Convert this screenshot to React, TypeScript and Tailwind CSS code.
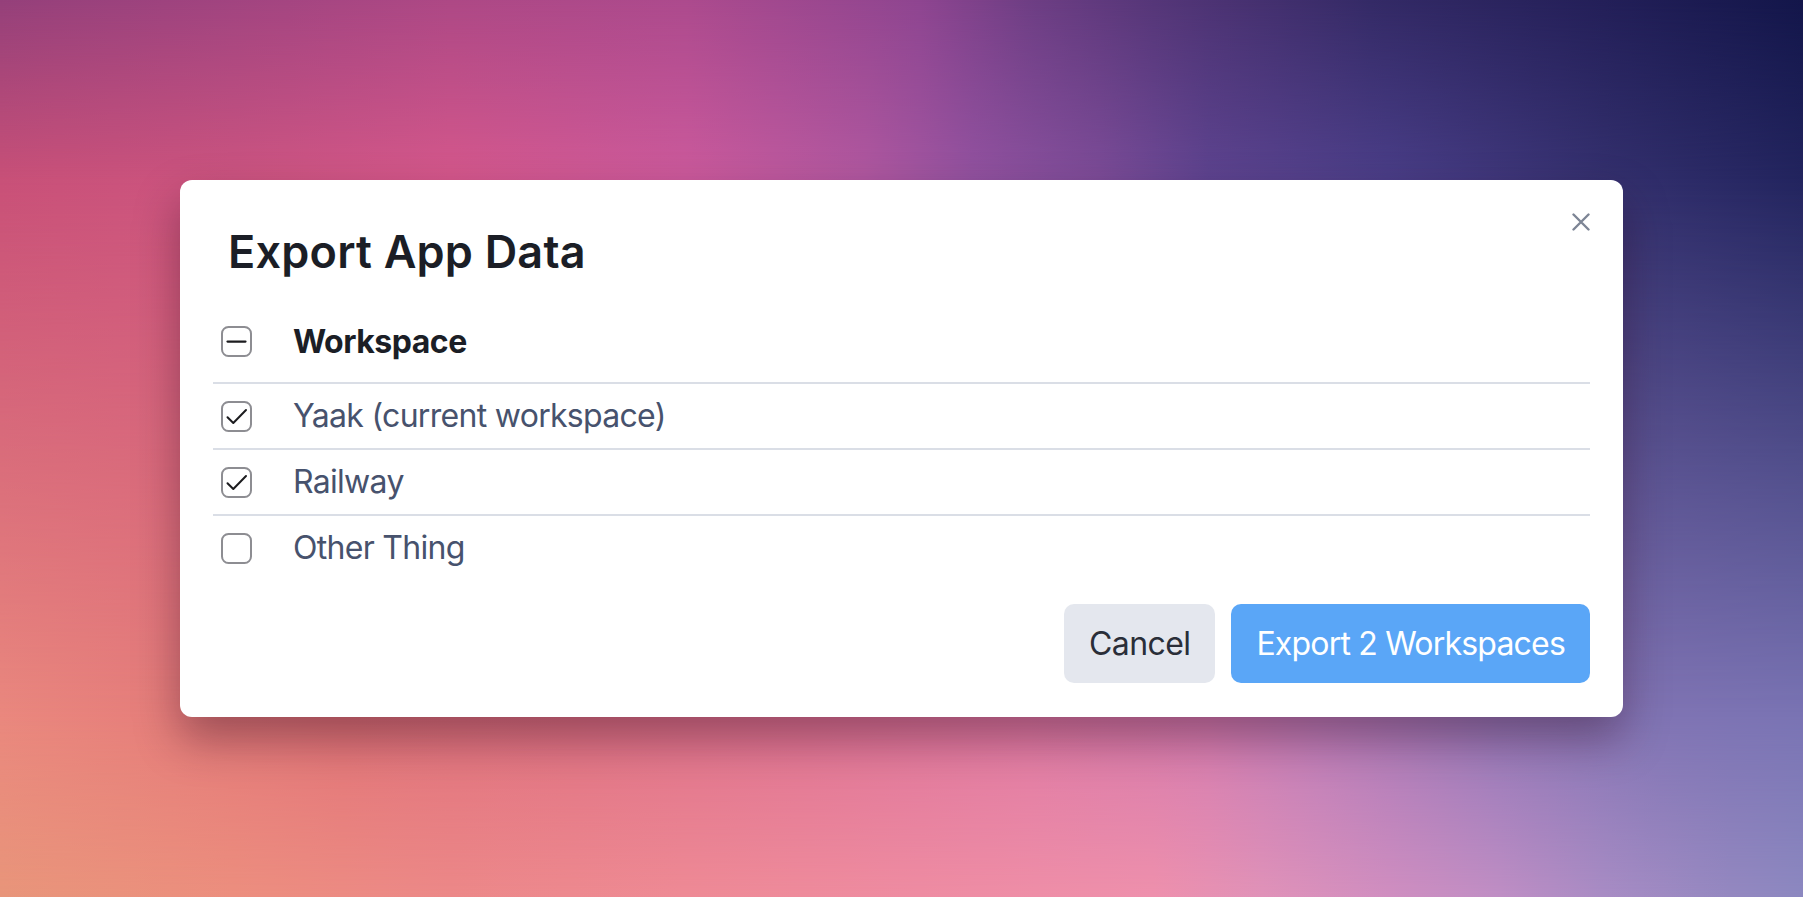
import React from "react";

type CheckState = "checked" | "unchecked" | "mixed";

const workspaces: { id: string; name: string; state: CheckState }[] = [
  { id: "yaak", name: "Yaak (current workspace)", state: "checked" },
  { id: "railway", name: "Railway", state: "checked" },
  { id: "other", name: "Other Thing", state: "unchecked" },
];

const Checkbox = ({ state }: { state: CheckState }) => (
  <svg width="31" height="31" viewBox="0 0 31 31" className="block shrink-0">
    <rect x="1" y="1" width="29" height="29" rx="6.5" fill="#fff" stroke="#8d8d92" strokeWidth="2" />
    {state === "checked" && (
      <path
        d="M6.5 16.2 L12.3 22 L25 9"
        fill="none"
        stroke="#1c1c1f"
        strokeWidth="2"
        strokeLinecap="round"
        strokeLinejoin="round"
      />
    )}
    {state === "mixed" && (
      <path d="M6.5 15.6 H24.5" stroke="#1c1c1f" strokeWidth="2.2" strokeLinecap="round" />
    )}
  </svg>
);

const CloseIcon = () => (
  <svg width="18" height="18" viewBox="0 0 18 18" className="block">
    <path d="M1.5 1.5 L16.5 16.5 M16.5 1.5 L1.5 16.5" stroke="#7d8595" strokeWidth="2.4" strokeLinecap="round" />
  </svg>
);

export default function App() {
  return (
    <div className="relative min-h-screen w-full overflow-hidden bg-[linear-gradient(to_right,#ea887e_0%,#e27478_19%,#e07284_32%,#e07494_45%,#e07aa4_57%,#d47cb0_67%,#bc7cb8_73%,#9478b8_83%,#8074b4_92%,#7a74b4_100%)] font-['Inter',sans-serif]">
      {/* background mesh, drawn in bands */}
      <div className="pointer-events-none absolute inset-0 bg-[linear-gradient(to_right,#c85078_0%,#cc5480_13%,#d5588c_25%,#cc5a9c_38%,#b058a0_48%,#9252a0_54%,#7c4c98_61%,#5e4490_67%,#4a3e88_77%,#34306e_89%,#22245e_100%)] [mask-image:linear-gradient(to_bottom,black_20%,transparent_80%)]" />
      <div className="pointer-events-none absolute inset-0 bg-[linear-gradient(to_right,#94407a_0%,#ad4885_25%,#ac4a8d_38%,#8e4590_51%,#6e3e84_57%,#553678_64%,#342a66_76%,#231f58_89%,#13164a_100%)] [mask-image:linear-gradient(to_bottom,black_0%,transparent_20%)]" />
      <div className="pointer-events-none absolute inset-0 bg-[linear-gradient(to_right,#e8957a_0%,#ec8e7e_13%,#ec8888_25%,#ee8a95_38%,#ee8ca2_51%,#ee90ac_64%,#e092b8_70%,#d08ec0_77%,#c08ec4_83%,#a88cc4_89%,#9488c0_96%,#8c88c0_100%)] [mask-image:linear-gradient(to_bottom,transparent_80%,black_100%)]" />

      <div className="relative flex min-h-screen items-center justify-center">
        <div className="relative w-[1443px] rounded-[12px] bg-white px-[33px] pb-[34px] pt-[45px] shadow-[0_22px_45px_rgba(40,5,25,0.38)]">
          <button className="absolute right-[33px] top-[33px]" aria-label="Close">
            <CloseIcon />
          </button>

          <h1 className="mb-[22px] pl-[15px] text-[45px] font-semibold leading-[54px] tracking-[0.2px] text-[#1b1e26]">
            Export App Data
          </h1>

          <div className="flex h-[83px] items-center border-b-2 border-[#dadee6]">
            <div className="w-[80px] pl-2">
              <Checkbox state="mixed" />
            </div>
            <span className="text-[32px] font-bold leading-[40px] tracking-[-0.5px] text-[#1b1e26]">Workspace</span>
          </div>

          {workspaces.map((w, i) => (
            <div
              key={w.id}
              className={`flex items-center ${
                i < workspaces.length - 1 ? "h-[66px] border-b-2 border-[#dadee6]" : "h-[64px]"
              }`}
            >
              <div className="w-[80px] pl-2">
                <Checkbox state={w.state} />
              </div>
              <span className="text-[32px] leading-[40px] tracking-[-0.7px] text-[#47526d]">{w.name}</span>
            </div>
          ))}

          <div className="mt-6 flex justify-end gap-4">
            <button className="h-[79px] rounded-[10px] bg-[#e4e7ee] px-[25px] text-[32px] tracking-[-0.6px] text-[#2a2e38]">
              Cancel
            </button>
            <button className="h-[79px] rounded-[10px] bg-[#5aa6f7] px-[25px] text-[32px] tracking-[-0.8px] text-white">
              Export 2 Workspaces
            </button>
          </div>
        </div>
      </div>
    </div>
  );
}
